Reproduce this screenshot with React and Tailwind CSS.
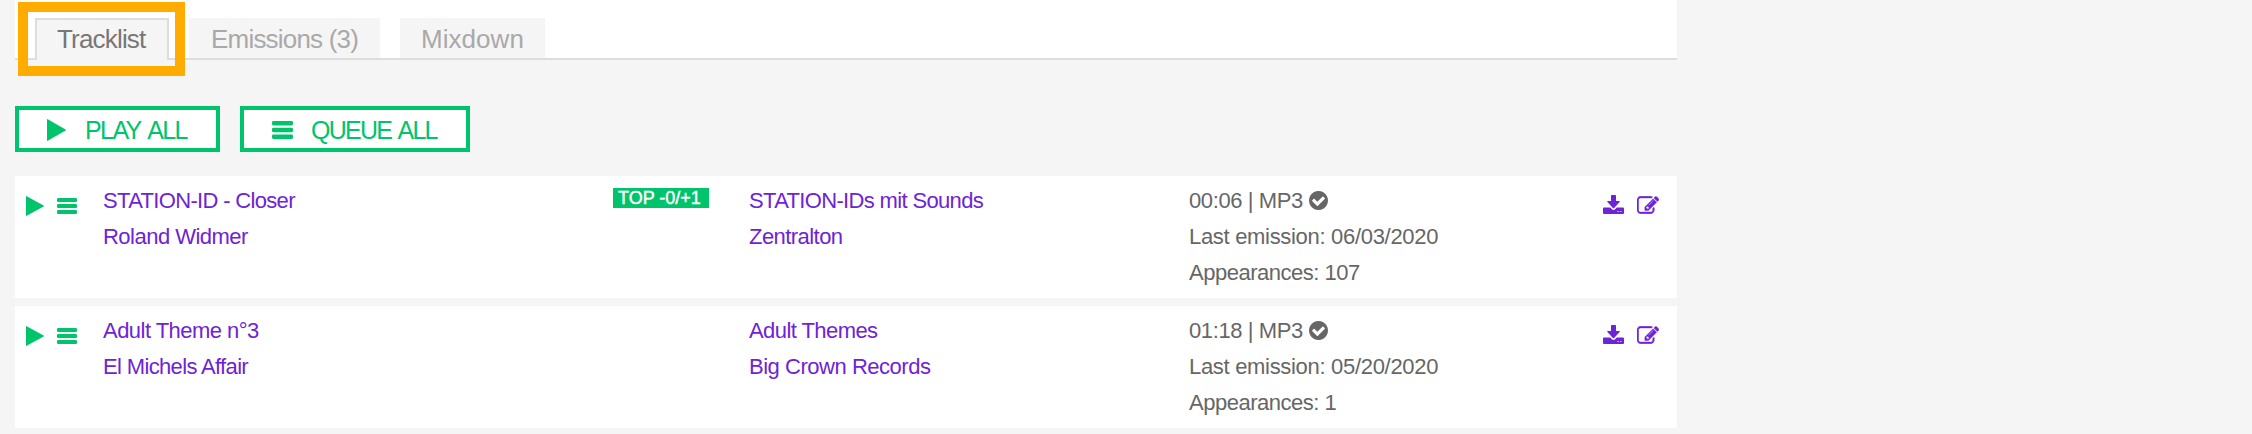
const EDIT =
  "M888 1184l116-116-152-152-116 116v56h96v96h56zm440-720q-16-16-33 1l-350 350q-17 17-1 33t33-1l350-350q17-17 1-33zm80 594v190q0 119-84.5 203.5t-203.5 84.5h-832q-119 0-203.5-84.5t-84.5-203.5v-832q0-119 84.5-203.5t203.5-84.5h832q63 0 117 25 15 7 18 23 3 17-9 29l-49 49q-14 14-32 8-23-6-45-6h-832q-66 0-113 47t-47 113v832q0 66 47 113t113 47h832q66 0 113-47t47-113v-126q0-13 9-22l64-64q15-15 35-7t20 29zm-96-738l288 288-672 672h-288v-288zm444 132l-92 92-288-288 92-92q28-28 68-28t68 28l152 152q28 28 28 68t-28 68z";
const CHECK =
  "M1412 734q0-28-18-46l-91-90q-19-19-45-19t-45 19l-408 407-226-226q-19-19-45-19t-45 19l-91 90q-18 18-18 46 0 27 18 45l362 362q19 19 45 19 27 0 46-19l543-543q18-18 18-45zm252 162q0 209-103 385.5t-279.5 279.5-385.5 103-385.5-103-279.5-279.5-103-385.5 103-385.5 279.5-279.5 385.5-103 385.5 103 279.5 279.5 103 385.5z";

function Play({ className }) {
  return (
    <svg viewBox="0 0 18 20" preserveAspectRatio="none" fill="currentColor" className={className}>
      <path d="M0 .6Q0-.2.7.2L17.6 9.5q.6.5 0 1L.7 19.8Q0 20.2 0 19.4z" />
    </svg>
  );
}

function Bars({ className }) {
  return (
    <svg viewBox="0 0 20 16" preserveAspectRatio="none" fill="currentColor" className={className}>
      <rect width="20" height="4" rx="1.3" />
      <rect y="6" width="20" height="4" rx="1.3" />
      <rect y="12" width="20" height="4" rx="1.3" />
    </svg>
  );
}

function Download({ className }) {
  return (
    <svg viewBox="0 0 21 19" fill="currentColor" className={className}>
      <path d="M8.600 0h3.800q.6 0 .6.6V6h3.200q1 0 .4.900l-5.500 6q-.6.6-1.200 0l-5.500-6Q3.800 6 4.800 6H8V.6Q8 0 8.600 0z" />
      <path
        fillRule="evenodd"
        d="M1 12.600h6.200l1.700 1.700q1.600 1.200 3.200 0l1.700-1.700H20q1 0 1 1V18q0 1-1 1H1q-1 0-1-1v-4.400q0-1 1-1zM14.500 16v1.100h1.100V16zM17.300 16v1.100h1.100V16z"
      />
    </svg>
  );
}

const tracks = [
  {
    title: ["STATION-ID - Closer", "tracking-[-0.67px]"],
    artist: ["Roland Widmer", "tracking-[-0.52px]"],
    badge: "TOP -0/+1",
    release: ["STATION-IDs mit Sounds", "tracking-[-0.66px]"],
    label: ["Zentralton", "tracking-[-0.55px]"],
    duration: "00:06",
    emission: "06/03/2020",
    appearances: 107,
  },
  {
    title: ["Adult Theme n°3", "tracking-[-0.53px]"],
    artist: ["El Michels Affair", "tracking-[-0.65px]"],
    release: ["Adult Themes", "tracking-[-0.57px]"],
    label: ["Big Crown Records", "tracking-[-0.47px]"],
    duration: "01:18",
    emission: "05/20/2020",
    appearances: 1,
  },
];

function Line({ text: [text, tracking] }) {
  return (
    <div>
      <a href="#" className={tracking}>{text}</a>
    </div>
  );
}

function Row({ track }) {
  return (
    <div className="grid h-[122px] grid-cols-[88px_510px_136px_440px_1fr_74px] bg-white pt-[7px] text-[22px] leading-9 whitespace-nowrap text-[#6e23d6]">
      <div className="flex items-start gap-[13px] pt-[13px] pl-[11px] text-[#00c46c]">
        <Play className="h-5 w-[18px]" />
        <Bars className="mt-0.5 h-4 w-5" />
      </div>
      <div>
        <Line text={track.title} />
        <Line text={track.artist} />
      </div>
      <div className="flex items-start pt-[5px]">
        {track.badge && (
          <span className="h-5 w-24 bg-[#00c46c] pl-[5px] text-lg leading-[21px] text-white [-webkit-text-stroke:0.4px_white]">
            {track.badge}
          </span>
        )}
      </div>
      <div>
        <Line text={track.release} />
        <Line text={track.label} />
      </div>
      <div className="text-[#666]">
        <div className="flex items-center gap-[6px]">
          <span className="tracking-[-0.4px]">{track.duration} | MP3</span>
          <svg viewBox="128 128 1536 1536" fill="currentColor" className="mb-0.5 size-[19px]">
            <path d={CHECK} />
          </svg>
        </div>
        <div className="tracking-[-0.31px]">Last emission: {track.emission}</div>
        <div className="tracking-[-0.49px]">Appearances: {track.appearances}</div>
      </div>
      <div className="flex items-start gap-[13px] pt-3 text-[#6e23d6]">
        <Download className="h-[19px] w-[21px]" />
        <svg viewBox="0 128 1792 1408" fill="currentColor" stroke="currentColor" strokeWidth="36" className="mt-[1px] h-[18px] w-[22px]">
          <path d={EDIT} />
        </svg>
      </div>
    </div>
  );
}

export default function App() {
  return (
    <div className="relative h-[434px] w-full overflow-hidden bg-[#f5f5f5] pl-[15px] font-['Liberation_Sans',Arial,sans-serif]">
      <div className="w-[1662px]">
        <nav className="flex h-[60px] items-end gap-5 border-b-2 border-[#ddd] bg-white pl-5 text-[26px] whitespace-nowrap text-[#a9a9a9]">
          <a href="#" className="-mb-0.5 h-[42px] w-[134px] border-x-2 border-t-2 border-[#ddd] bg-[#f5f5f5] pl-5 leading-[39px] tracking-[-0.82px] text-[#777]">
            Tracklist
          </a>
          <a href="#" className="h-10 w-[191px] bg-[#f5f5f5] pl-[22px] leading-[42px] tracking-[-0.8px]">
            Emissions (3)
          </a>
          <a href="#" className="h-10 w-[145px] bg-[#f5f5f5] pl-[21px] leading-[42px] tracking-[0.05px]">
            Mixdown
          </a>
        </nav>
        <div className="mt-[46px] flex gap-5 text-[25px] leading-10 whitespace-nowrap text-[#00c46c]">
          <button className="flex h-[46px] w-[205px] items-center border-4 border-[#00c46c] bg-white pl-7">
            <Play className="mt-0.5 h-[22px] w-[19px]" />
            <span className="mt-0.5 ml-[19px] tracking-[-1.6px] [word-spacing:3px]">PLAY ALL</span>
          </button>
          <button className="flex h-[46px] w-[230px] items-center border-4 border-[#00c46c] bg-white pl-7">
            <Bars className="mt-0.5 h-[18px] w-[21px]" />
            <span className="mt-0.5 ml-[18px] tracking-[-1.75px] [word-spacing:2.5px]">QUEUE ALL</span>
          </button>
        </div>
        <div className="mt-6 flex flex-col gap-2">
          {tracks.map((track) => (
            <Row key={track.title[0]} track={track} />
          ))}
        </div>
      </div>
      <div className="pointer-events-none absolute top-0.5 left-[18px] h-[74px] w-[167px] border-10 border-[#ffab00]" />
    </div>
  );
}
